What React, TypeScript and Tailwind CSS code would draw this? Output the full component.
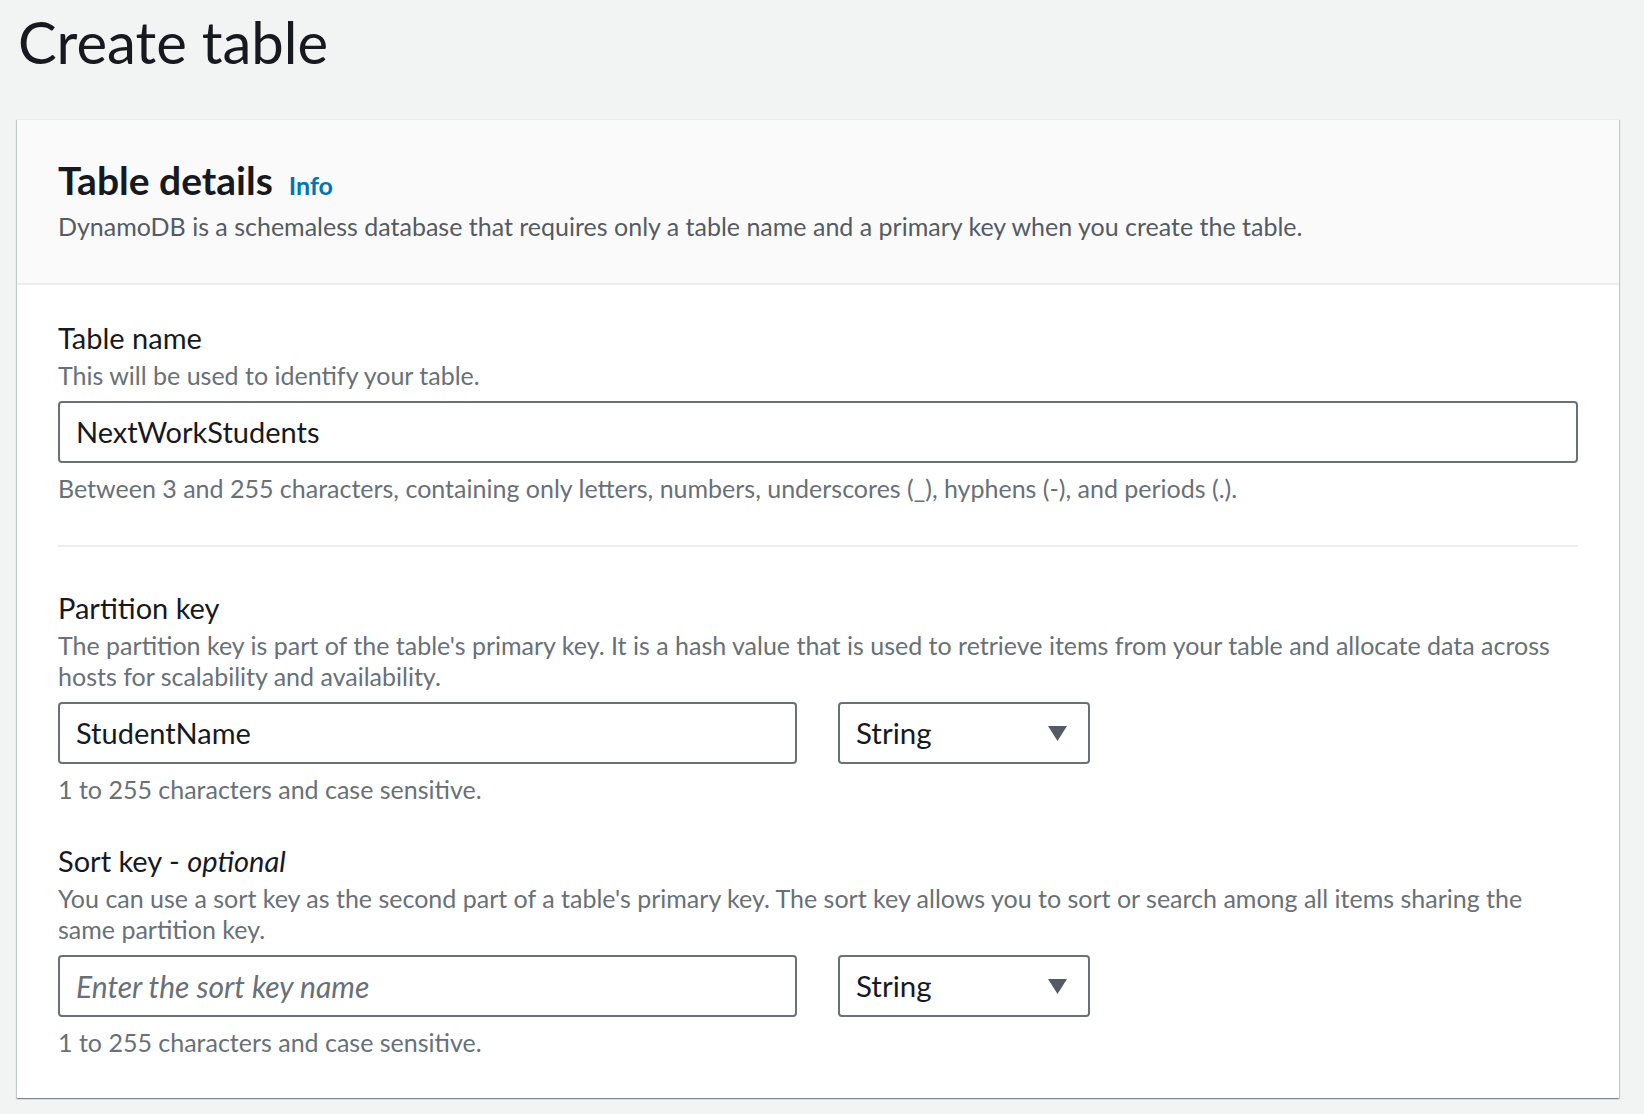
import React from 'react';

interface FieldProps {
    label: React.ReactNode;
    description: string;
    children: React.ReactNode;
    hint: string;
}

const Field: React.FC<FieldProps> = ({ label, description, children, hint }) => {
    return (
        <div className="flex flex-col">
            <div className="text-[29px] leading-[32px] text-[#16191f]">{label}</div>
            <p className="mt-[6px] text-[25px] leading-[31px] text-[#687078]">{description}</p>
            <div className="mt-[10px] flex flex-row gap-x-[41px]">{children}</div>
            <p className="mt-[10px] text-[25px] leading-[31px] text-[#687078]">{hint}</p>
        </div>
    );
};

const TextInput: React.FC<{ value?: string; placeholder?: string; className?: string }> = ({ value, placeholder, className }) => (
    <div className={`flex h-[62px] items-center rounded-[4px] border-2 border-[#687078] bg-white pl-[16px] ${className ?? ''}`}>
        {value ? (
            <span className="text-[29px] text-[#16191f]">{value}</span>
        ) : (
            <span className="text-[30px] italic text-[#687078]">{placeholder}</span>
        )}
    </div>
);

const SelectBox: React.FC<{ value: string }> = ({ value }) => (
    <div className="flex h-[62px] w-[252px] items-center justify-between rounded-[4px] border-2 border-[#687078] bg-white pl-[16px] pr-[21px]">
        <span className="text-[29.5px] text-[#16191f]">{value}</span>
        <svg width="19" height="15" viewBox="0 0 19 15">
            <path d="M0 0 H19 L9.5 15 Z" fill="#545b64" />
        </svg>
    </div>
);

export default function App() {
    return (
        <div className="min-h-screen bg-[#f2f3f3] pl-[17px] pt-[10px] pb-[16px] font-['Lato','Liberation_Sans',sans-serif]">
            <h1 className="pl-[1px] text-[58px] leading-[64px] text-[#16191f]">Create table</h1>

            <div className="mt-[45px] w-[1602px] bg-white shadow-[0_1px_1px_0_rgba(0,28,36,0.3),1px_1px_1px_0_rgba(0,28,36,0.15),-1px_1px_1px_0_rgba(0,28,36,0.15)] border-t border-[#eaeded]">
                <div className="border-b-2 border-[#eaeded] bg-[#fafafa] px-[41px] pt-[38px] pb-[41px]">
                    <div className="flex h-[44px] flex-row items-baseline gap-x-[16px]">
                        <h2 className="text-[39px] font-bold leading-[44px] text-[#16191f]">Table details</h2>
                        <span className="text-[25px] font-bold leading-none text-[#0073bb]">Info</span>
                    </div>
                    <p className="mt-[8px] text-[25px] leading-[32px] text-[#545b64]">
                        DynamoDB is a schemaless database that requires only a table name and a primary key when you create the table.
                    </p>
                </div>

                <div className="px-[41px] pt-[37px] pb-[40px]">
                    <Field
                        label="Table name"
                        description="This will be used to identify your table."
                        hint="Between 3 and 255 characters, containing only letters, numbers, underscores (_), hyphens (-), and periods (.)."
                    >
                        <TextInput value="NextWorkStudents" className="flex-1" />
                    </Field>

                    <div className="mt-[41px] h-[2px] bg-[#eaeded]" />

                    <div className="mt-[45px]">
                        <Field
                            label="Partition key"
                            description="The partition key is part of the table's primary key. It is a hash value that is used to retrieve items from your table and allocate data across hosts for scalability and availability."
                            hint="1 to 255 characters and case sensitive."
                        >
                            <TextInput value="StudentName" className="w-[739px]" />
                            <SelectBox value="String" />
                        </Field>
                    </div>

                    <div className="mt-[40px]">
                        <Field
                            label={<>Sort key - <i>optional</i></>}
                            description="You can use a sort key as the second part of a table's primary key. The sort key allows you to sort or search among all items sharing the same partition key."
                            hint="1 to 255 characters and case sensitive."
                        >
                            <TextInput placeholder="Enter the sort key name" className="w-[739px]" />
                            <SelectBox value="String" />
                        </Field>
                    </div>
                </div>
            </div>
        </div>
    );
}
